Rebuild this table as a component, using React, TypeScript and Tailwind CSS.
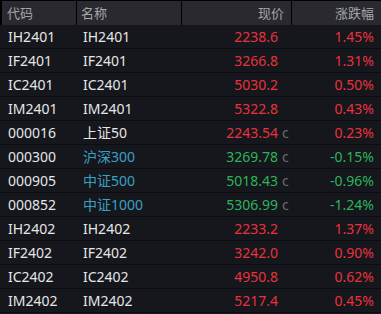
import React from "react";

type Row = {
  code: string;
  name: string;
  price: string;
  pct: string;
  up: boolean;
  idx?: boolean;
  teal?: boolean;
};

const rows: Row[] = [
  { code: "IH2401", name: "IH2401", price: "2238.6", pct: "1.45%", up: true },
  { code: "IF2401", name: "IF2401", price: "3266.8", pct: "1.31%", up: true },
  { code: "IC2401", name: "IC2401", price: "5030.2", pct: "0.50%", up: true },
  { code: "IM2401", name: "IM2401", price: "5322.8", pct: "0.43%", up: true },
  { code: "000016", name: "上证50", price: "2243.54", pct: "0.23%", up: true, idx: true },
  { code: "000300", name: "沪深300", price: "3269.78", pct: "-0.15%", up: false, idx: true, teal: true },
  { code: "000905", name: "中证500", price: "5018.43", pct: "-0.96%", up: false, idx: true, teal: true },
  { code: "000852", name: "中证1000", price: "5306.99", pct: "-1.24%", up: false, idx: true, teal: true },
  { code: "IH2402", name: "IH2402", price: "2233.2", pct: "1.37%", up: true },
  { code: "IF2402", name: "IF2402", price: "3242.0", pct: "0.90%", up: true },
  { code: "IC2402", name: "IC2402", price: "4950.8", pct: "0.62%", up: true },
  { code: "IM2402", name: "IM2402", price: "5217.4", pct: "0.45%", up: true },
];

const font = { fontFamily: '"Noto Sans", "Noto Sans CJK SC", sans-serif' };

export default function App() {
  return (
    <div className="w-[381px] h-[314px] bg-[#15171c] overflow-hidden text-[14px] leading-none" style={font}>
      <div className="grid grid-cols-[76px_105px_110px_90px] h-[25px] bg-[#2a292f] border-t border-black text-[#a3a7ab] text-[13px]">
        <div className="border-l-2 border-black pl-[5px] flex items-center">代码</div>
        <div className="border-l border-black pl-[4px] flex items-center">名称</div>
        <div className="border-l border-black pr-[7px] flex items-center justify-end">现价</div>
        <div className="border-l border-black pr-[7px] flex items-center justify-end">涨跌幅</div>
      </div>
      {rows.map((r) => (
        <div
          key={r.code}
          className="grid grid-cols-[76px_105px_110px_90px] h-[24px] border-b border-[#0c0d10] items-center"
        >
          <div className="pl-[8px] text-[#e6e6e6]">{r.code}</div>
          <div className={`pl-[7px] ${r.teal ? "text-[#3aa0c4]" : "text-[#e6e6e6]"}`}>{r.name}</div>
          <div className={`flex justify-end ${r.up ? "text-[#e8323c]" : "text-[#2db35a]"}`}>
            <span>{r.price}</span>
            <span className={`w-[13px] pl-[4px] text-[#6b6b6b] ${r.idx ? "" : "invisible"}`}>c</span>
          </div>
          <div className={`text-right pr-[7px] ${r.up ? "text-[#e8323c]" : "text-[#2db35a]"}`}>{r.pct}</div>
        </div>
      ))}
    </div>
  );
}
